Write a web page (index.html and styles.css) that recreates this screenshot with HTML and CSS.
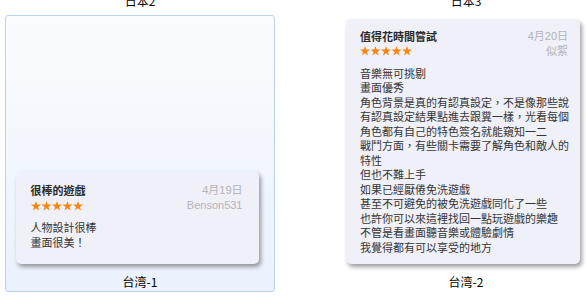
FILE: index.html
```html
<!DOCTYPE html>
<html lang="zh-Hant">
<head>
<meta charset="utf-8">
<link rel="stylesheet" href="styles.css">
</head>
<body>
<div class="grid">
  <div class="row row-prev">
    <div class="item"><div class="label">日本2</div></div>
    <div class="item"><div class="label">日本3</div></div>
  </div>
  <div class="row">
    <div class="item selected">
      <div class="thumb">
        <div class="card card-a">
          <div class="head">
            <div class="title">很棒的遊戲</div>
            <div class="date">4月19日</div>
          </div>
          <div class="head sub">
            <svg class="stars" width="52" height="10" viewBox="0 0 52 10"><g fill="#f7860f"><polygon points="5,0 6.2,3.6 10,3.6 6.9,5.9 8.1,9.6 5,7.3 1.9,9.6 3.1,5.9 0,3.6 3.8,3.6"/><polygon transform="translate(10.5 0)" points="5,0 6.2,3.6 10,3.6 6.9,5.9 8.1,9.6 5,7.3 1.9,9.6 3.1,5.9 0,3.6 3.8,3.6"/><polygon transform="translate(21 0)" points="5,0 6.2,3.6 10,3.6 6.9,5.9 8.1,9.6 5,7.3 1.9,9.6 3.1,5.9 0,3.6 3.8,3.6"/><polygon transform="translate(31.5 0)" points="5,0 6.2,3.6 10,3.6 6.9,5.9 8.1,9.6 5,7.3 1.9,9.6 3.1,5.9 0,3.6 3.8,3.6"/><polygon transform="translate(42 0)" points="5,0 6.2,3.6 10,3.6 6.9,5.9 8.1,9.6 5,7.3 1.9,9.6 3.1,5.9 0,3.6 3.8,3.6"/></g></svg>
            <div class="date">Benson531</div>
          </div>
          <div class="body">人物設計很棒<br>畫面很美！</div>
        </div>
      </div>
      <div class="label">台湾-1</div>
    </div>
    <div class="item">
      <div class="thumb">
        <div class="card card-b">
          <div class="head">
            <div class="title">值得花時間嘗試</div>
            <div class="date">4月20日</div>
          </div>
          <div class="head sub">
            <svg class="stars" width="52" height="10" viewBox="0 0 52 10"><g fill="#f7860f"><polygon points="5,0 6.2,3.6 10,3.6 6.9,5.9 8.1,9.6 5,7.3 1.9,9.6 3.1,5.9 0,3.6 3.8,3.6"/><polygon transform="translate(10.5 0)" points="5,0 6.2,3.6 10,3.6 6.9,5.9 8.1,9.6 5,7.3 1.9,9.6 3.1,5.9 0,3.6 3.8,3.6"/><polygon transform="translate(21 0)" points="5,0 6.2,3.6 10,3.6 6.9,5.9 8.1,9.6 5,7.3 1.9,9.6 3.1,5.9 0,3.6 3.8,3.6"/><polygon transform="translate(31.5 0)" points="5,0 6.2,3.6 10,3.6 6.9,5.9 8.1,9.6 5,7.3 1.9,9.6 3.1,5.9 0,3.6 3.8,3.6"/><polygon transform="translate(42 0)" points="5,0 6.2,3.6 10,3.6 6.9,5.9 8.1,9.6 5,7.3 1.9,9.6 3.1,5.9 0,3.6 3.8,3.6"/></g></svg>
            <div class="date">似絮</div>
          </div>
          <div class="body">音樂無可挑剔<br>畫面優秀<br>角色背景是真的有認真設定，不是像那些說<br>有認真設定結果點進去跟糞一樣，光看每個<br>角色都有自己的特色簽名就能窺知一二<br>戰鬥方面，有些關卡需要了解角色和敵人的<br>特性<br>但也不難上手<br>如果已經厭倦免洗遊戲<br>甚至不可避免的被免洗遊戲同化了一些<br>也許你可以來這裡找回一點玩遊戲的樂趣<br>不管是看畫面聽音樂或體驗劇情<br>我覺得都有可以享受的地方</div>
        </div>
      </div>
      <div class="label">台湾-2</div>
    </div>
  </div>
</div>
</body>
</html>
```

FILE: styles.css
```css
html, body {
  margin: 0;
  padding: 0;
  background: #ffffff;
  overflow: hidden;
}

body {
  font-family: "Liberation Sans", "Noto Sans CJK TC", sans-serif;
  color: #000;
}

.grid {
  display: flex;
  flex-direction: column;
  padding-left: 5px;
  margin-top: -7px;
}

.row {
  display: flex;
  gap: 56px;
}

.row-prev {
  height: 22px;
}

.item {
  width: 270px;
  flex: none;
  box-sizing: border-box;
  border: 1px solid transparent;
  border-radius: 3px;
  display: flex;
  flex-direction: column;
}

.row-prev .item {
  border: none;
}

.selected {
  border-color: #b9d2f2;
  background: linear-gradient(180deg, #fbfcfe 0%, #f2f6fd 55%, #eaf2fd 100%);
}

.label {
  font-size: 12px;
  line-height: 16px;
  padding: 4px 0 1px;
  text-align: center;
  font-family: "Noto Sans CJK TC", "Liberation Sans", sans-serif;
}

.row-prev .label {
  padding: 0;
}

.thumb {
  height: 254px;
  display: flex;
  flex-direction: column;
  justify-content: flex-end;
  align-items: center;
  padding-bottom: 6px;
  box-sizing: border-box;
}

.card {
  background: #f0f0f8;
  border-radius: 5px;
  box-shadow: 2px 3px 4px rgba(0, 0, 0, 0.38);
  box-sizing: border-box;
  margin-right: 6px;
  font-size: 11px;
  color: #333;
}

.card-a {
  width: 243px;
  padding: 12px 16px 15px 15px;
}

.card-b {
  width: 234px;
  padding: 10px 12px 10px 14px;
}

.head {
  display: flex;
  justify-content: space-between;
  align-items: center;
  line-height: 15px;
}

.title {
  font-weight: bold;
  color: #2a2a2a;
  font-family: "Noto Sans CJK TC", sans-serif;
}

.date {
  color: #b3b3b8;
}

.stars {
  display: block;
}

.body {
  margin-top: 7px;
  line-height: 14.5px;
  font-family: "Noto Sans CJK TC", sans-serif;
  color: #353535;
  white-space: nowrap;
}
```
